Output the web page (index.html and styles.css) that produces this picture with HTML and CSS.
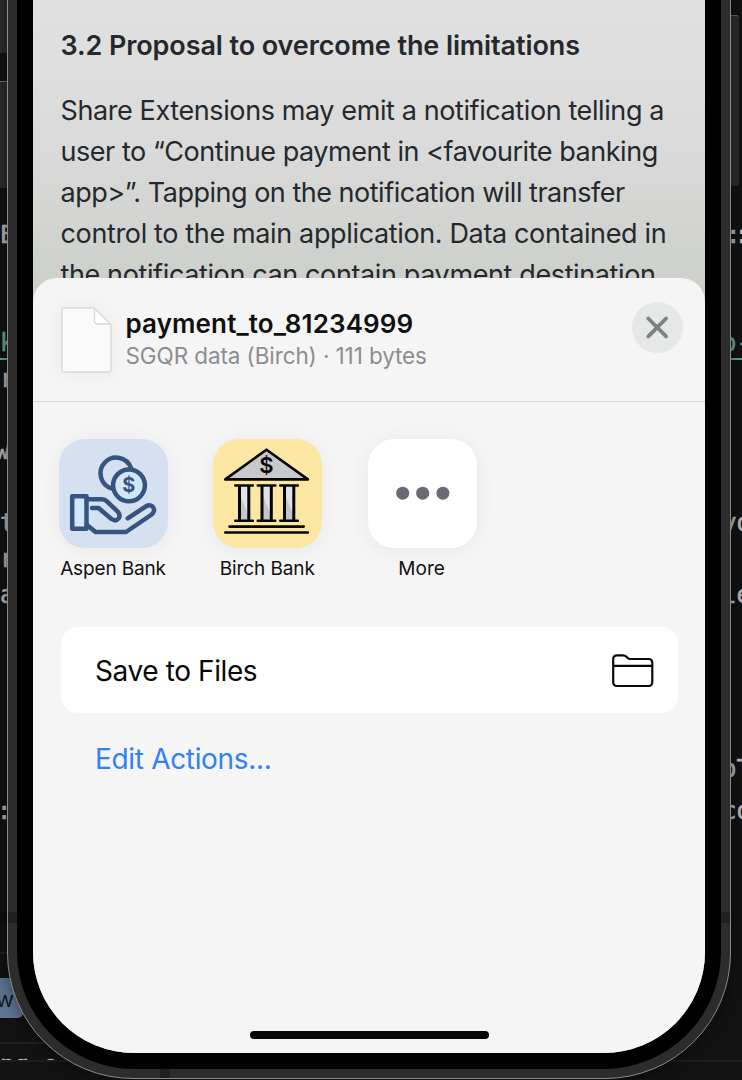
FILE: index.html
```html
<!DOCTYPE html>
<html lang="en">
<head>
<meta charset="utf-8">
<title>Share sheet</title>
<link rel="stylesheet" href="styles.css">
</head>
<body>
<div class="stage">
  <div class="desk" aria-hidden="true">
    <i class="block block-a"></i><i class="block block-b"></i><i class="block block-c"></i>
    <i class="block bar-left"></i><i class="block bar-right"></i>
    <i class="block strip-a"></i><i class="block strip-b"></i><i class="block strip-c"></i>
    <span class="code l" style="top:217px">E</span>
    <span class="code l link" style="top:325px">k</span>
    <span class="code l" style="top:361px">r</span>
    <span class="code l shift" style="top:433px">w</span>
    <span class="code l" style="top:505px">t</span>
    <span class="code l" style="top:541px">r</span>
    <span class="code l" style="top:577px">a</span>
    <span class="code l colon" style="top:793px">:</span>
    <span class="code r colons" style="top:217px">::</span>
    <span class="code r link" style="top:325px">o-</span>
    <span class="code r" style="top:505px">yo</span>
    <span class="code r" style="top:577px">le</span>
    <span class="code r" style="top:751px">oT</span>
    <span class="code r" style="top:793px">co</span>
    <span class="chip">w</span>
    <span class="code foot">ng e</span>
  </div>
  <div class="phone">
    <i class="band band-l"></i><i class="band band-r"></i><i class="band band-b"></i>
    <div class="bezel">
      <div class="screen">
        <div class="page">
          <h3 class="heading"><span>3.2 Proposal to overcome the limitations</span></h3>
          <p class="para"><span class="p1">Share Extensions may emit a notification telling a</span><span class="p2">user to “Continue payment in &lt;favourite banking</span><span class="p3">app&gt;”. Tapping on the notification will transfer</span><span class="p4">control to the main application. Data contained in</span><span class="p5">the notification can contain payment destination,</span></p>
        </div>
        <div class="sheet">
          <header class="head">
            <svg class="doc" width="52" height="67" viewBox="0 0 52 67"><path d="M3 1H33L50 18V63Q50 65 48 65H3Q1 65 1 63V3Q1 1 3 1Z" fill="#fafafa" stroke="#d8d8d8" stroke-width="1.3"/><path d="M33.5 1.5V14Q33.5 17 36.5 17H49.5Z" fill="#fff" stroke="#d8d8d8" stroke-width="1.3"/></svg>
            <div class="meta">
              <div class="name">payment_to_81234999</div>
              <div class="sub">SGQR data (Birch) · 111 bytes</div>
            </div>
            <button class="close" aria-label="Close"><svg width="51" height="51" viewBox="0 0 51 51"><path d="M16.300 16.500L34.100 34.300M34.100 16.500L16.300 34.300" stroke="#7f8082" stroke-width="3.8" stroke-linecap="round"/></svg></button>
          </header>
          <div class="apps">
            <div class="app">
              <div class="tile blue">
                <svg width="109" height="109" viewBox="0 0 109 109" fill="none" stroke="#36547f" stroke-width="4.500" stroke-linecap="round" stroke-linejoin="round">
                  <path d="M52.500 49.300A15.700 15.700 0 1 1 72 29"/>
                  <circle cx="70" cy="46.300" r="15.900" fill="#d3e7fa"/>
                  <rect x="13.200" y="57.300" width="14.300" height="32.400" fill="#d3e7fa"/>
                  <path d="M28 60.300H43Q46 60.300 48.500 62.800L59 73Q61.500 76 60 79Q57 83 52.500 80L39.500 69H33"/>
                  <path d="M28 86L36.500 93H67L92 76C98.500 71.500 93.500 63.500 87 67.300L68.700 79.300"/>
                  <text x="69.800" y="53.300" text-anchor="middle" class="coin">$</text>
                </svg>
              </div>
              <span class="label aspen">Aspen Bank</span>
            </div>
            <div class="app">
              <div class="tile yellow">
                <svg width="109" height="109" viewBox="0 0 109 109" fill="none" stroke="#050505" stroke-width="2.600" stroke-linecap="round" stroke-linejoin="round">
                  <path d="M53.500 10.700L12.300 40.400H94.900Z" fill="#c8c9cb"/>
                  <path d="M26.500 47H36V82H26.500ZM49 47H58.500V82H49ZM71.500 47H81V82H71.500Z" fill="#c4c5c8" stroke="none"/>
                  <path d="M26.500 47H36V77L27.500 57ZM49 47H58.500V77L50 57ZM71.500 47H81V77L72.500 57Z" fill="#e2e2e6" stroke="none"/>
                  <path stroke-width="3" stroke-linecap="butt" d="M26.500 46V82M35.800 46V82M49 46V82M58.300 46V82M71.500 46V82M80.800 46V82"/>
                  <path d="M22.300 46.500H39.800M44.800 46.500H62.300M67.300 46.500H84.800M22.300 81.800H39.800M44.800 81.800H62.300M67.300 81.800H84.800M16.500 87.600H90.700M12.300 93.500H94.900"/>
                  <text x="53.500" y="34" text-anchor="middle" class="dollar">$</text>
                </svg>
              </div>
              <span class="label birch">Birch Bank</span>
            </div>
            <div class="app">
              <div class="tile white">
                <svg width="109" height="109" viewBox="0 0 109 109" fill="#696a73"><circle cx="34.700" cy="54.200" r="6.500"/><circle cx="54.700" cy="54.200" r="6.500"/><circle cx="74.900" cy="54.200" r="6.500"/></svg>
              </div>
              <span class="label more">More</span>
            </div>
          </div>
          <div class="save"><span class="savetext">Save to Files</span>
            <svg width="42" height="34" viewBox="0 0 42 34" fill="none" stroke="#0a0a0a" stroke-width="2.200" stroke-linejoin="round"><path d="M1.200 28V5Q1.200 1.300 5 1.300H11Q13 1.300 14.300 2.600L15.500 3.800Q16.700 5 18.500 5H36.500Q40.300 5 40.300 9V28Q40.300 32 36.500 32H5Q1.200 32 1.200 28ZM1.200 11.800H40.300"/></svg>
          </div>
          <div class="edit"><span>Edit Actions...</span></div>
          <i class="home"></i>
        </div>
      </div>
    </div>
  </div>
</div>
</body>
</html>
```
FILE: styles.css
```css
* { box-sizing: border-box; }
body { margin: 0; background: #111; font-family: Inter, "Liberation Sans", sans-serif; }
.stage { position: relative; width: 742px; height: 1080px; overflow: hidden; background: #121212; }
.desk { position: absolute; inset: 0; }
.block { position: absolute; background: #2c2c2c; }
.block-a { left: 0; top: 0; width: 8px; height: 53px; }
.block-b { left: 0; top: 81px; width: 8px; height: 107px; border-top: 1px solid #777; }
.block-c { left: 725px; top: 15px; width: 14px; height: 171px; border-top: 1px solid #666; border-radius: 0 3px 3px 0; }
.bar-left { left: 0; top: 912px; width: 8px; height: 11px; background: #0d0d0d; }
.bar-right { left: 730px; top: 912px; width: 12px; height: 11px; background: #111; }
.strip-a { left: 0; top: 952px; width: 12px; height: 2px; background: #202020; }
.strip-b { left: 0; top: 1042px; width: 60px; height: 2px; background: #202020; }
.strip-c { left: 0; top: 1060px; width: 742px; height: 2px; background: #1d1d1d; }
.code { position: absolute; font: 24px/36px "DejaVu Sans Mono", monospace; color: #bababa; -webkit-text-stroke: .6px; white-space: pre; }
.l { left: 0; }
.shift { left: -5px; }
.colon { left: -3px; }
.r { left: 722px; }
.colons { letter-spacing: -6px; left: 726px; }
.link { color: #6aa494; border-bottom: 2px solid #6aa494; height: 35px; }
.chip { position: absolute; left: -10px; top: 978px; width: 33px; height: 40px; padding-left: 6px; border-radius: 5px; background: #607493; color: #151a20; font: 22px/43px Inter, sans-serif; }
.foot { left: 0; top: 1047px; height: 13px; overflow: hidden; }

.phone { position: absolute; left: 7px; top: -61px; width: 724px; height: 1140px; padding: 0 9px 9px; border: 1px solid #8b8b8b; border-radius: 0 0 126px 126px; background: #2c2c2c; box-shadow: 0 0 16px rgba(0,0,0,.5); }
.band { position: absolute; background: #202020; }
.band-l { left: 0; top: 972px; width: 9px; height: 11px; }
.band-r { right: 0; top: 972px; width: 9px; height: 11px; }
.band-b { left: 152px; bottom: 0; width: 10px; height: 9px; }
.bezel { height: 100%; padding: 60px 16px 16px; background: #000; border-radius: 0 0 117px 117px; }
.screen { height: 1053px; overflow: hidden; display: flex; flex-direction: column; border-radius: 0 0 101px 101px; background: linear-gradient(#e0e0e0 0, #dedede 70px, #d9dad9 150px, #ced0cc 275px, #cbcdca 310px); }
.page { flex: none; height: 278px; overflow: hidden; padding: 25px 28px 0 27.500px; color: #25292e; }
.heading { margin: 0; font-size: 27px; line-height: 41px; font-weight: 600; letter-spacing: -.1px; white-space: nowrap; }
.para { margin: 24px 0 0; font-size: 27px; line-height: 41px; white-space: nowrap; }
.para span { display: block; }
.p1 { letter-spacing: -.4px; }
.p2 { letter-spacing: -.46px; }
.p3 { letter-spacing: -.49px; }
.p4 { letter-spacing: -.36px; }
.p5 { letter-spacing: -.38px; }

.sheet { flex: 1; display: flex; flex-direction: column; min-height: 0; border-radius: 24px 24px 0 0; background: #f5f5f5; }
.head { height: 124px; padding: 29px 22px 0 27.500px; display: flex; align-items: flex-start; border-bottom: 1px solid #d5d5d5; }
.doc { flex: none; filter: drop-shadow(0 1px 8px rgba(0,0,0,.05)); }
.meta { flex: 1; padding: 1px 0 0 13px; white-space: nowrap; }
.name { font-size: 26px; line-height: 32px; font-weight: 600; letter-spacing: .11px; color: #101010; }
.sub { font-size: 22.500px; line-height: 32px; letter-spacing: -.1px; color: #8d8d8e; }
.close { width: 51px; height: 51px; margin-top: -5px; padding: 0; border: 0; border-radius: 50%; background: #e6e7e7; }
.close svg { display: block; }
.apps { display: flex; gap: 45.300px; padding: 37px 0 0 26px; height: 225px; }
.app { width: 109px; display: flex; flex-direction: column; align-items: center; }
.tile { width: 109px; height: 109px; border-radius: 26px; box-shadow: 0 2px 22px rgba(0,0,0,.055); }
.tile svg { display: block; }
.blue { background: #d5e1f0; }
.yellow { background: #fbe6a2; }
.white { background: #fff; }
.label { margin: 9px 0 0 -1px; font-size: 19px; line-height: 24px; color: #111; white-space: nowrap; }
.aspen { letter-spacing: -.15px; }
.birch { letter-spacing: -.1px; }
.coin { font: 700 20px Inter, sans-serif; fill: #36547f; stroke: none; }
.dollar { font: 600 22px Inter, sans-serif; fill: #050505; stroke: none; }
.save { flex: none; height: 86px; margin: 0 27.500px; padding: 1px 23.500px 0 34.500px; border-radius: 17px; background: #fff; display: flex; align-items: center; justify-content: space-between; font-size: 28px; color: #080808; letter-spacing: -.4px; }
.edit { padding: 26px 0 0 62px; font-size: 28px; line-height: 40px; color: #3280f6; letter-spacing: -.33px; }
.home { width: 239px; height: 8px; border-radius: 4px; background: #050505; margin: auto auto 14px; }
```
